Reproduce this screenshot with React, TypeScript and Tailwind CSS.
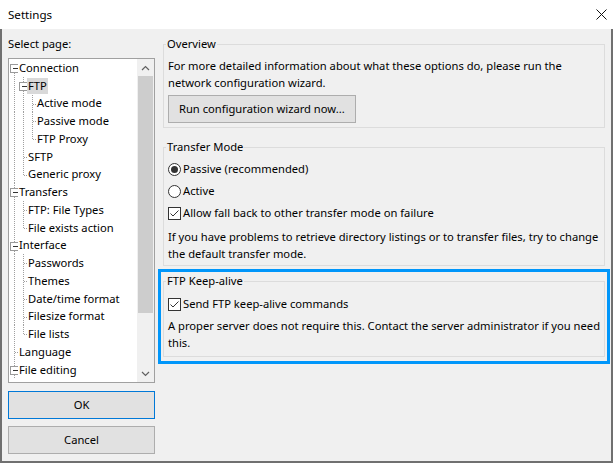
import React from "react";

type TNode = { label: string; level: number; exp?: boolean; last?: boolean; sel?: boolean };

const nodes: TNode[] = [
  { label: "Connection", level: 0, exp: true },
  { label: "FTP", level: 1, exp: true, sel: true },
  { label: "Active mode", level: 2 },
  { label: "Passive mode", level: 2 },
  { label: "FTP Proxy", level: 2, last: true },
  { label: "SFTP", level: 1 },
  { label: "Generic proxy", level: 1, last: true },
  { label: "Transfers", level: 0, exp: true },
  { label: "FTP: File Types", level: 1 },
  { label: "File exists action", level: 1, last: true },
  { label: "Interface", level: 0, exp: true },
  { label: "Passwords", level: 1 },
  { label: "Themes", level: 1 },
  { label: "Date/time format", level: 1 },
  { label: "Filesize format", level: 1 },
  { label: "File lists", level: 1, last: true },
  { label: "Language", level: 0 },
  { label: "File editing", level: 0, exp: true },
];

const H = 17.76;
const LINE = "#a0a0a0";

function buildRows() {
  const open: boolean[] = [];
  return nodes.map((n, i) => {
    const anc: number[] = [];
    for (let k = 0; k < n.level; k++) if (open[k]) anc.push(k);
    open[n.level] = !n.last;
    return { ...n, anc, first: i === 0 };
  });
}

function Guide({ level, anc, exp, last, first }: { level: number; anc: number[]; exp?: boolean; last?: boolean; first?: boolean }) {
  const w = 9 + 9 * level;
  const cx = 5 + 9 * level + 0.5;
  const mid = Math.round(H / 2) + 0.5;
  return (
    <svg width={w} height={H} className="shrink-0" shapeRendering="crispEdges">
      {anc.map((k) => (
        <line key={k} x1={5 + 9 * k + 0.5} y1={0} x2={5 + 9 * k + 0.5} y2={H} stroke={LINE} strokeDasharray="1 1" />
      ))}
      <line x1={cx} y1={first ? mid : 0} x2={cx} y2={last ? mid : H} stroke={LINE} strokeDasharray="1 1" />
      <line x1={cx} y1={mid} x2={w} y2={mid} stroke={LINE} strokeDasharray="1 1" />
      {exp && (
        <g>
          <rect x={cx - 4} y={mid - 4} width={8} height={8} fill="#ffffff" stroke="#9a9a9a" />
          <line x1={cx - 2} y1={mid} x2={cx + 3} y2={mid} stroke="#333333" />
        </g>
      )}
    </svg>
  );
}

function Chevron({ up }: { up?: boolean }) {
  return (
    <svg width="9" height="6" viewBox="0 0 9 6">
      <path d={up ? "M1 5 L4.5 1.5 L8 5" : "M1 1 L4.5 4.5 L8 1"} fill="none" stroke="#606060" strokeWidth="1.2" />
    </svg>
  );
}

function Radio({ checked }: { checked?: boolean }) {
  return (
    <span className="w-[13px] h-[13px] rounded-full border border-[#333333] bg-white flex items-center justify-center shrink-0">
      {checked && <span className="w-[7px] h-[7px] rounded-full bg-[#333333]" />}
    </span>
  );
}

function Check() {
  return (
    <span className="w-[13px] h-[13px] border border-[#333333] bg-white flex items-center justify-center shrink-0">
      <svg width="11" height="11" viewBox="0 0 11 11">
        <path d="M1.5 5.5 L4 8 L9.5 2.5" fill="none" stroke="#333333" strokeWidth="1" />
      </svg>
    </span>
  );
}

export default function App() {
  const rows = buildRows();
  return (
    <div className="w-[613px] h-[463px] flex flex-col bg-[#f0f0f0] text-[11.2px] text-black font-['Noto_Sans',sans-serif] overflow-hidden">
      {/* title bar */}
      <div className="h-[29px] bg-white flex items-center justify-between pl-[8px] pr-[6px] shrink-0">
        <span className="leading-[16px] text-[11.6px]">Settings</span>
        <svg width="11" height="11" viewBox="0 0 11 11">
          <path d="M0.5 0.5 L10.5 10.5 M10.5 0.5 L0.5 10.5" stroke="#111" strokeWidth="1" />
        </svg>
      </div>
      {/* body */}
      <div className="flex-1 flex border-l-2 border-r-2 border-b-2 border-[#707070] pl-[6px] pr-[4px] pt-[7px] gap-[8px]">
        {/* left */}
        <div className="w-[147px] flex flex-col shrink-0">
          <div className="leading-[16px] h-[16px]">Select page:</div>
          <div className="mt-[6px] h-[325px] border border-[#a0a0a0] bg-white flex">
            <div className="flex-1 overflow-hidden">
              {rows.map((r, i) => (
                <div key={i} className="flex items-center h-[17.76px]">
                  <Guide level={r.level} anc={r.anc} exp={r.exp} last={r.last} first={r.first} />
                  <span className={`px-[1px] leading-[16px] whitespace-nowrap ${r.sel ? "bg-[#d9d9d9]" : ""}`}>{r.label}</span>
                </div>
              ))}
            </div>
            <div className="w-[17px] flex flex-col bg-[#f0f0f0]">
              <div className="h-[17px] flex items-center justify-center">
                <Chevron up />
              </div>
              <div className="flex-1 flex flex-col px-[1px]">
                <div className="h-[237px] bg-[#cdcdcd]" />
              </div>
              <div className="h-[17px] flex items-center justify-center">
                <Chevron />
              </div>
            </div>
          </div>
          <button className="mt-[8px] h-[28px] border border-[#0078d7] bg-[#e1e1e1] flex items-center justify-center">OK</button>
          <button className="mt-[7px] h-[28px] border border-[#adadad] bg-[#e1e1e1] flex items-center justify-center">Cancel</button>
        </div>
        {/* right */}
        <div className="w-[442px] min-w-0 flex flex-col">
          <fieldset className="min-w-0 border border-[#dcdcdc] pb-[4px]">
            <legend className="ml-[2px] px-[1px] leading-[16px]">Overview</legend>
            <div className="pl-[4px] pt-[5px] leading-[17px] whitespace-nowrap">
              For more detailed information about what these options do, please run the
              <br />
              network configuration wizard.
            </div>
            <button className="ml-[4px] mt-[4px] h-[28px] px-[10px] border border-[#adadad] bg-[#e1e1e1] flex items-center">
              Run configuration wizard now...
            </button>
          </fieldset>

          <fieldset className="min-w-0 mt-[11px] border border-[#dcdcdc] pb-[3px]">
            <legend className="ml-[2px] px-[1px] leading-[16px]">Transfer Mode</legend>
            <div className="pt-[3px] pl-[4px]">
              <div className="h-[22px] flex items-center gap-[2px]">
                <Radio checked />
                <span>Passive (recommended)</span>
              </div>
              <div className="h-[22px] flex items-center gap-[2px]">
                <Radio />
                <span>Active</span>
              </div>
              <div className="h-[22px] flex items-center gap-[2px]">
                <Check />
                <span>Allow fall back to other transfer mode on failure</span>
              </div>
              <div className="mt-[4px] leading-[17px] whitespace-nowrap">
                If you have problems to retrieve directory listings or to transfer files, try to change
                <br />
                the default transfer mode.
              </div>
            </div>
          </fieldset>

          <div className="relative mt-[7px]">
            <fieldset className="min-w-0 border border-[#dcdcdc] pb-[5px]">
              <legend className="ml-[2px] px-[1px] leading-[16px]">FTP Keep-alive</legend>
              <div className="pt-[4px] pl-[4px]">
                <div className="h-[22px] flex items-center gap-[2px]">
                  <Check />
                  <span>Send FTP keep-alive commands</span>
                </div>
                <div className="mt-[2px] leading-[17px] whitespace-nowrap">
                  A proper server does not require this. Contact the server administrator if you need
                  <br />
                  this.
                </div>
              </div>
            </fieldset>
            <div className="absolute -left-[5px] -top-[4px] -right-[5px] -bottom-[7px] border-[3px] border-[#0096fa] pointer-events-none" />
          </div>
        </div>
      </div>
    </div>
  );
}
